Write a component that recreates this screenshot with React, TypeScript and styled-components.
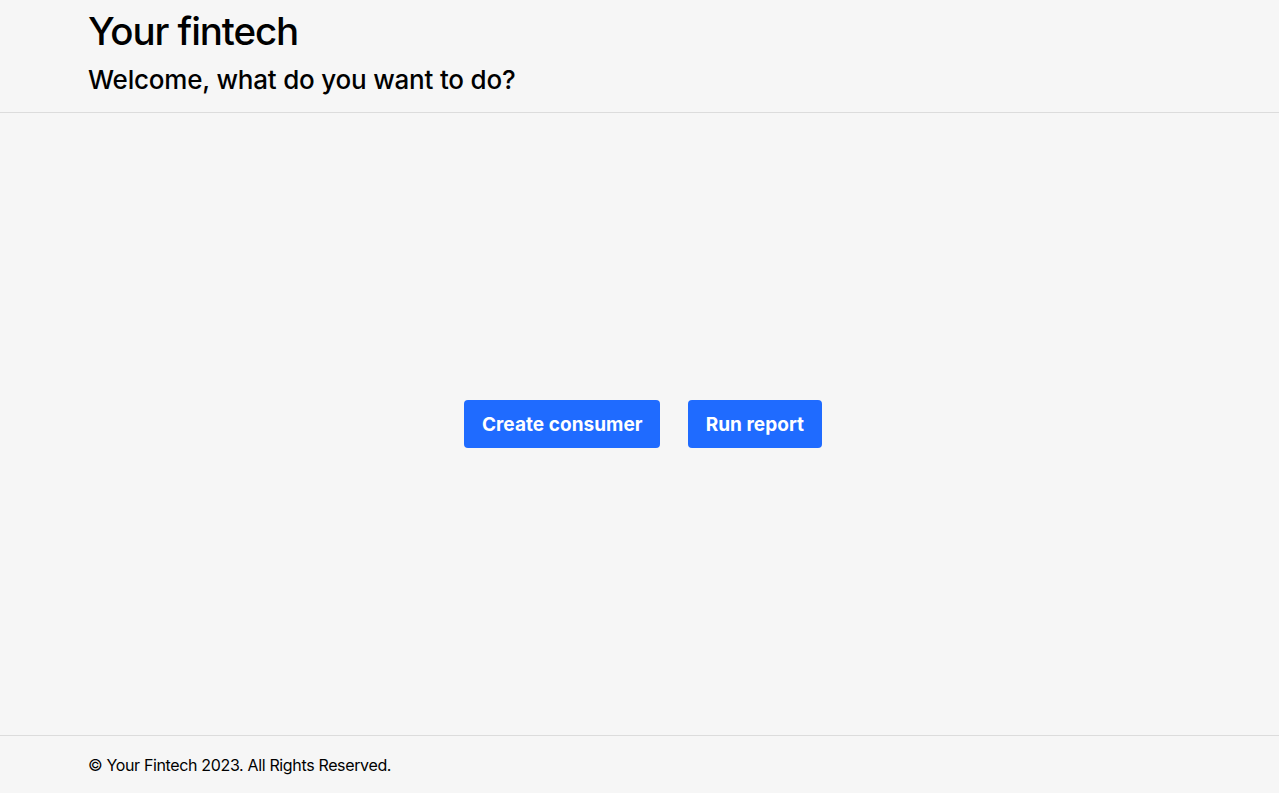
import React from "react";
import styled, { createGlobalStyle } from "styled-components";

const GlobalStyle = createGlobalStyle`
  html, body { margin: 0; padding: 0; background: #f6f6f6; }
  body { font-family: Inter, "Noto Sans", sans-serif; color: #000; }
  * { box-sizing: border-box; }
`;

const Page = styled.div`
  display: flex;
  flex-direction: column;
  min-height: 793px;
  background: #f6f6f6;
`;

const Header = styled.header`
  padding: 7px 88px 17px;
  border-bottom: 1px solid #dcdcdc;
  display: flex;
  flex-direction: column;
  gap: 9px;
`;

const Title = styled.h1`
  margin: 0;
  font-size: 38.5px;
  line-height: 48px;
  font-weight: 500;
  letter-spacing: -1.1px;
`;

const Subtitle = styled.h2`
  margin: 0;
  font-size: 26px;
  line-height: 31px;
  font-weight: 500;
  letter-spacing: -0.2px;
`;

const Main = styled.main`
  flex: 1;
  display: flex;
  align-items: center;
  justify-content: center;
  gap: 28px;
  padding-left: 7px;
`;

const Button = styled.button`
  height: 48px;
  padding: 0 17.5px;
  border: none;
  border-radius: 4px;
  background: #1f6bff;
  color: #fff;
  font-family: Inter, "Noto Sans", sans-serif;
  font-size: 19px;
  font-weight: 700;
  letter-spacing: 0.05px;
  cursor: pointer;
`;

const Footer = styled.footer`
  height: 58px;
  border-top: 1px solid #dcdcdc;
  padding: 0 88px;
  display: flex;
  align-items: center;
  font-size: 16px;
  letter-spacing: -0.35px;
`;

export default function App() {
  return (
    <>
      <GlobalStyle />
      <Page>
        <Header>
          <Title>Your fintech</Title>
          <Subtitle>Welcome, what do you want to do?</Subtitle>
        </Header>
        <Main>
          <Button>Create consumer</Button>
          <Button>Run report</Button>
        </Main>
        <Footer>© Your Fintech 2023. All Rights Reserved.</Footer>
      </Page>
    </>
  );
}
